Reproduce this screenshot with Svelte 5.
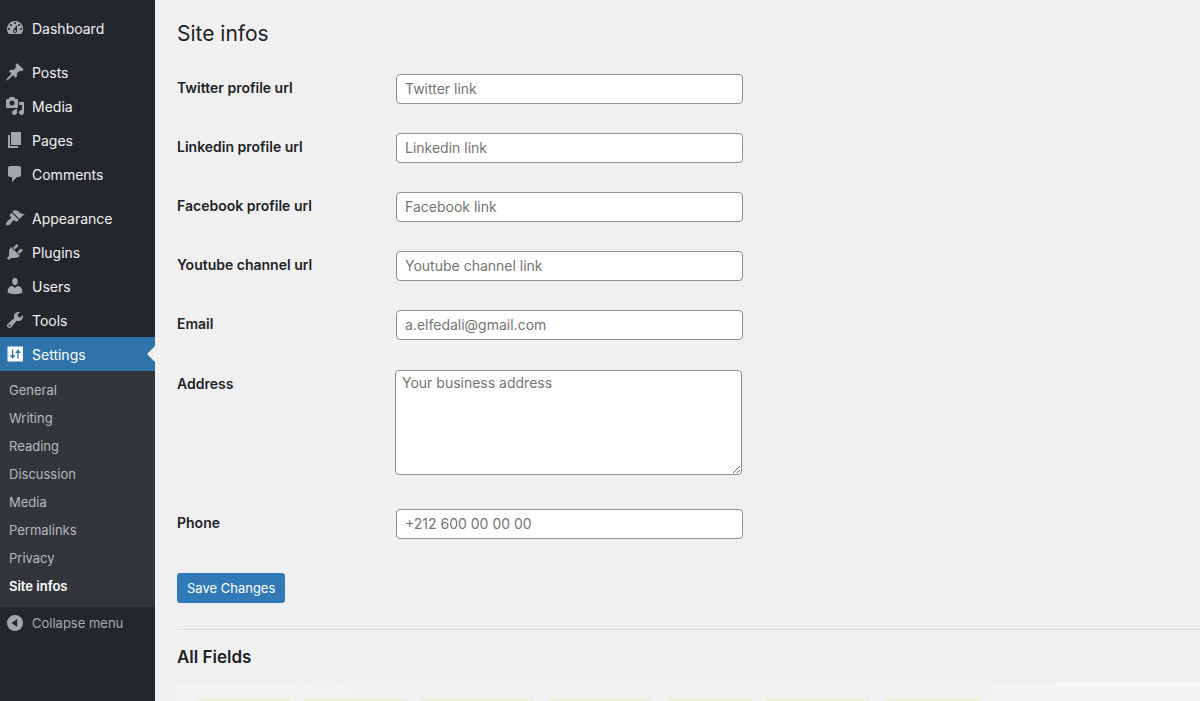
<script lang="ts">
	interface MenuItem {
		label: string;
		icon: string;
		separated?: boolean;
		current?: boolean;
	}

	interface Field {
		id: string;
		label: string;
		placeholder: string;
		type?: string;
		multiline?: boolean;
	}

	const menu: MenuItem[] = [
		{ label: 'Dashboard', icon: 'dashboard' },
		{ label: 'Posts', icon: 'pin', separated: true },
		{ label: 'Media', icon: 'media' },
		{ label: 'Pages', icon: 'pages' },
		{ label: 'Comments', icon: 'comments' },
		{ label: 'Appearance', icon: 'brush', separated: true },
		{ label: 'Plugins', icon: 'plug' },
		{ label: 'Users', icon: 'user' },
		{ label: 'Tools', icon: 'wrench' },
		{ label: 'Settings', icon: 'settings', current: true }
	];

	const submenu = ['General', 'Writing', 'Reading', 'Discussion', 'Media', 'Permalinks', 'Privacy', 'Site infos'];
	const currentPage = 'Site infos';

	// Glyphs on a 20x20 grid
	const icons: Record<string, string> = {
		dashboard:
			'M3.76 16h12.48A7.998 7.998 0 0 0 10 3a7.998 7.998 0 0 0-6.24 13zM10 4c.55 0 1 .45 1 1s-.45 1-1 1-1-.45-1-1 .45-1 1-1zM6 6c.55 0 1 .45 1 1s-.45 1-1 1-1-.45-1-1 .45-1 1-1zm8 0c.55 0 1 .45 1 1s-.45 1-1 1-1-.45-1-1 .45-1 1-1zm-5.37 5.55L12 7v6c0 1.1-.9 2-2 2s-2-.9-2-2c0-.57.24-1.08.63-1.45zM4 10c.55 0 1 .45 1 1s-.45 1-1 1-1-.45-1-1 .45-1 1-1zm12 0c.55 0 1 .45 1 1s-.45 1-1 1-1-.45-1-1 .45-1 1-1zm-5 3c0-.55-.45-1-1-1s-1 .45-1 1 .45 1 1 1 1-.45 1-1z',
		pin: 'M10.44 3.02l1.82-1.82 6.36 6.35-1.83 1.82c-1.05-.68-2.48-.57-3.41.36l-.75.75c-.92.93-1.04 2.35-.35 3.41l-1.83 1.82-2.41-2.41-2.8 2.79c-.42.42-3.38 2.71-3.8 2.29s1.86-3.39 2.28-3.81l2.79-2.79L4.1 9.36l1.83-1.82c1.05.69 2.48.57 3.4-.36l.75-.75c.93-.92 1.05-2.35.36-3.41z',
		media:
			'M13 11V4c0-.55-.45-1-1-1h-1.67L9 1H5L3.67 3H2c-.55 0-1 .45-1 1v7c0 .55.45 1 1 1h10c.55 0 1-.45 1-1zM7 4.5c1.38 0 2.5 1.12 2.5 2.5S8.38 9.5 7 9.5 4.5 8.38 4.5 7 5.62 4.5 7 4.5zM14 6h5v10.5c0 1.38-1.12 2.5-2.5 2.5S14 17.88 14 16.5s1.12-2.5 2.5-2.5c.17 0 .34.02.5.05V9h-3V6zm-4 8.05V13h2v3.5c0 1.38-1.12 2.5-2.5 2.5S7 17.88 7 16.5 8.12 14 9.5 14c.17 0 .34.02.5.05z',
		pages: 'M6 15V2h10v13H6zm-1 1h8v2H3V5h2v11z',
		comments: 'M5 2h9c1.1 0 2 .9 2 2v7c0 1.1-.9 2-2 2h-2l-5 5v-5H5c-1.1 0-2-.9-2-2V4c0-1.1.9-2 2-2z',
		brush:
			'M14.48 11.06L7.41 3.99l1.5-1.5c.5-.56 2.3-.47 3.51.32 1.21.8 1.43 1.28 2.91 2.1 1.18.64 2.45 1.26 4.45.85zm-.71.71L6.7 4.7 4.93 6.47c-.39.39-.39 1.02 0 1.41l1.06 1.06c.39.39.39 1.03 0 1.42-.6.6-1.43 1.11-2.21 1.69-.35.26-.7.53-1.01.84C1.43 14.23.4 16.08 1.4 17.07c.99 1 2.84-.03 4.18-1.36.31-.31.58-.66.85-1.02.57-.78 1.08-1.61 1.69-2.21.39-.39 1.02-.39 1.41 0l1.06 1.06c.39.39 1.02.39 1.41 0z',
		plug: 'M13.11 4.36L9.87 7.6 8 5.73l3.24-3.24c.35-.34 1.05-.2 1.56.32.52.51.66 1.21.31 1.55zm-8 1.77l.91-1.12 9.01 9.01-1.19.84c-.71.71-2.63 1.16-3.82 1.16H6.14L4.9 17.26c-.59.59-1.54.59-2.12 0-.59-.58-.59-1.53 0-2.12l1.24-1.24v-3.88c0-1.13.4-3.19 1.09-3.89zm7.26 3.97l3.24-3.24c.34-.35 1.04-.21 1.55.31.52.51.66 1.21.31 1.55l-3.24 3.25z',
		user: 'M10 9.25c-2.27 0-2.73-3.44-2.73-3.44C7 4.02 7.82 2 9.97 2c2.16 0 2.98 2.02 2.71 3.81 0 0-.41 3.44-2.68 3.44zm0 2.57L12.72 10c2.39 0 4.52 2.33 4.52 4.53v2.49s-3.65 1.13-7.24 1.13c-3.65 0-7.24-1.13-7.24-1.13v-2.49c0-2.25 1.94-4.48 4.47-4.48z',
		wrench:
			'M16.68 9.77c-1.34 1.34-3.3 1.67-4.95.99l-5.41 6.52c-.99.99-2.59.99-3.58 0s-.99-2.59 0-3.57l6.52-5.42c-.68-1.65-.35-3.61.99-4.95 1.28-1.28 3.12-1.62 4.72-1.06l-2.89 2.89 2.82 2.82 2.86-2.87c.53 1.58.18 3.39-1.08 4.65zM3.81 16.21c.4.39 1.04.39 1.43 0 .4-.4.4-1.04 0-1.43-.39-.4-1.03-.4-1.43 0-.39.39-.39 1.03 0 1.43z',
		settings:
			'M3 2.5h14.5q.5 0 .5.5v14q0 .5-.5.5H3q-.5 0-.5-.5V3q0-.5.5-.5zM7 5.5v5.7H4.8L7.6 14.8l2.8-3.6H8.2V5.5zM12.4 14.5V9h-2.2L13 5.3 15.8 9h-2.2v5.5z',
		collapse: 'M10 2a8 8 0 1 0 0 16 8 8 0 0 0 0-16zm2.2 12L6.6 10l5.6-4z'
	};

	const fields: Field[] = [
		{ id: 'twitter', label: 'Twitter profile url', placeholder: 'Twitter link' },
		{ id: 'linkedin', label: 'Linkedin profile url', placeholder: 'Linkedin link' },
		{ id: 'facebook', label: 'Facebook profile url', placeholder: 'Facebook link' },
		{ id: 'youtube', label: 'Youtube channel url', placeholder: 'Youtube channel link' },
		{ id: 'email', label: 'Email', placeholder: 'a.elfedali@gmail.com', type: 'email' },
		{ id: 'address', label: 'Address', placeholder: 'Your business address', multiline: true },
		{ id: 'phone', label: 'Phone', placeholder: '+212 600 00 00 00', type: 'tel' }
	];

	// Highlighted columns at the top of the fields panel
	const highlights = [93, 102, 113, 105, 85, 104, 96];
</script>

{#snippet icon(name: string)}
	<svg class="icon" viewBox="0 0 20 20" aria-hidden="true">
		<path fill-rule="evenodd" d={icons[name]} />
	</svg>
{/snippet}

<div class="admin">
	<nav class="sidebar" aria-label="Main menu">
		<ul class="menu">
			{#each menu as item}
				<li class:separated={item.separated}>
					<a href="#{item.icon}" class="menu-link" class:current={item.current}>
						{@render icon(item.icon)}
						<span>{item.label}</span>
					</a>
				</li>
			{/each}
		</ul>
		<ul class="submenu">
			{#each submenu as page}
				<li>
					<a href="#settings" class:active={page === currentPage}>{page}</a>
				</li>
			{/each}
		</ul>
		<button type="button" class="collapse">
			{@render icon('collapse')}
			<span>Collapse menu</span>
		</button>
	</nav>

	<main class="content">
		<h1>Site infos</h1>

		<form onsubmit={(e) => e.preventDefault()}>
			{#each fields as field}
				<div class="row" class:multiline={field.multiline}>
					<label for={field.id}>{field.label}</label>
					{#if field.multiline}
						<textarea id={field.id} placeholder={field.placeholder}></textarea>
					{:else}
						<input id={field.id} type={field.type ?? 'text'} placeholder={field.placeholder} />
					{/if}
				</div>
			{/each}
			<button type="submit" class="save">Save Changes</button>
		</form>

		<hr />

		<h2>All Fields</h2>
		<div class="panel">
			{#each highlights as width}
				<span class="highlight" style="width: {width}px"></span>
			{/each}
		</div>
	</main>
</div>

<style>
	:global(body) {
		margin: 0;
		background: #f0f0f1;
	}

	.admin {
		display: flex;
		min-height: 100vh;
		font-family: Inter, 'Liberation Sans', sans-serif;
		font-size: 14px;
		color: #1d2327;
	}

	.sidebar {
		flex: 0 0 155px;
		box-sizing: border-box;
		padding-top: 11px;
		background: #23272c;
	}

	ul {
		list-style: none;
		margin: 0;
		padding: 0;
	}

	.separated {
		margin-top: 10px;
	}

	.menu-link {
		position: relative;
		display: flex;
		align-items: center;
		gap: 7px;
		height: 34px;
		padding-left: 5px;
		color: #f0f0f1;
		text-decoration: none;
	}

	.icon {
		flex: none;
		width: 20px;
		height: 20px;
		fill: #a2a7ab;
	}

	.current {
		background: #2e73aa;
		color: #fff;
	}

	.current .icon {
		fill: #fff;
	}

	.current::after {
		content: '';
		position: absolute;
		top: 9px;
		right: 0;
		border: 8px solid transparent;
		border-left-width: 0;
		border-right-color: #f0f0f1;
	}

	.submenu {
		padding: 5px 0 7px;
		background: #32363b;
	}

	.submenu a {
		display: block;
		padding-left: 9px;
		font-size: 13px;
		line-height: 28px;
		color: #b5b9bd;
		text-decoration: none;
	}

	.submenu .active {
		color: #fff;
		font-weight: 600;
	}

	.collapse {
		display: flex;
		align-items: center;
		gap: 7px;
		width: 100%;
		height: 32px;
		padding: 0 0 0 5px;
		border: 0;
		background: none;
		color: #a7aaad;
		font-family: inherit;
		font-size: 13px;
	}

	.content {
		flex: 1;
		min-width: 0;
		display: flex;
		flex-direction: column;
		padding-left: 22px;
	}

	h1 {
		margin: 0;
		padding: 19px 0 10px;
		font-size: 21px;
		font-weight: 400;
		line-height: 30px;
	}

	.row {
		display: flex;
		align-items: flex-start;
		padding: 15px 0 14px;
	}

	.row label {
		flex: 0 0 219px;
		font-weight: 600;
		line-height: 28px;
	}

	input,
	textarea {
		box-sizing: border-box;
		width: 347px;
		margin: 0;
		border: 1px solid #8c8f94;
		border-radius: 4px;
		background: #fff;
		color: #2c3338;
		font-family: inherit;
		font-size: 14px;
	}

	input {
		height: 30px;
		padding: 0 8px 2px;
	}

	textarea {
		height: 105px;
		padding: 2px 6px;
		line-height: 20px;
	}

	.multiline {
		padding: 16px 0 19px;
	}

	.multiline label {
		flex-basis: 218px;
	}

	::placeholder {
		color: #757575;
		opacity: 1;
	}

	.save {
		height: 30px;
		margin-top: 20px;
		padding: 0 10px;
		border: 0;
		border-radius: 3px;
		background: #327ab7;
		color: #fff;
		font-family: inherit;
		font-size: 13px;
	}

	hr {
		width: 100%;
		margin: 26px 0 0;
		border: 0;
		border-top: 1px solid #dcdcde;
		border-bottom: 1px solid #f6f7f7;
	}

	h2 {
		margin: 14px 0 13px;
		font-size: 17px;
		font-weight: 600;
		line-height: 24px;
	}

	.panel {
		flex: 1;
		display: flex;
		align-items: flex-end;
		gap: 14px;
		padding-left: 21px;
		background: linear-gradient(90deg, #f4f4f4, #f2f2f2 20%, #f2f2f2 78%, #f5f5f5 90%);
	}

	.highlight {
		height: 3px;
		background: #eff0dc;
	}
</style>
